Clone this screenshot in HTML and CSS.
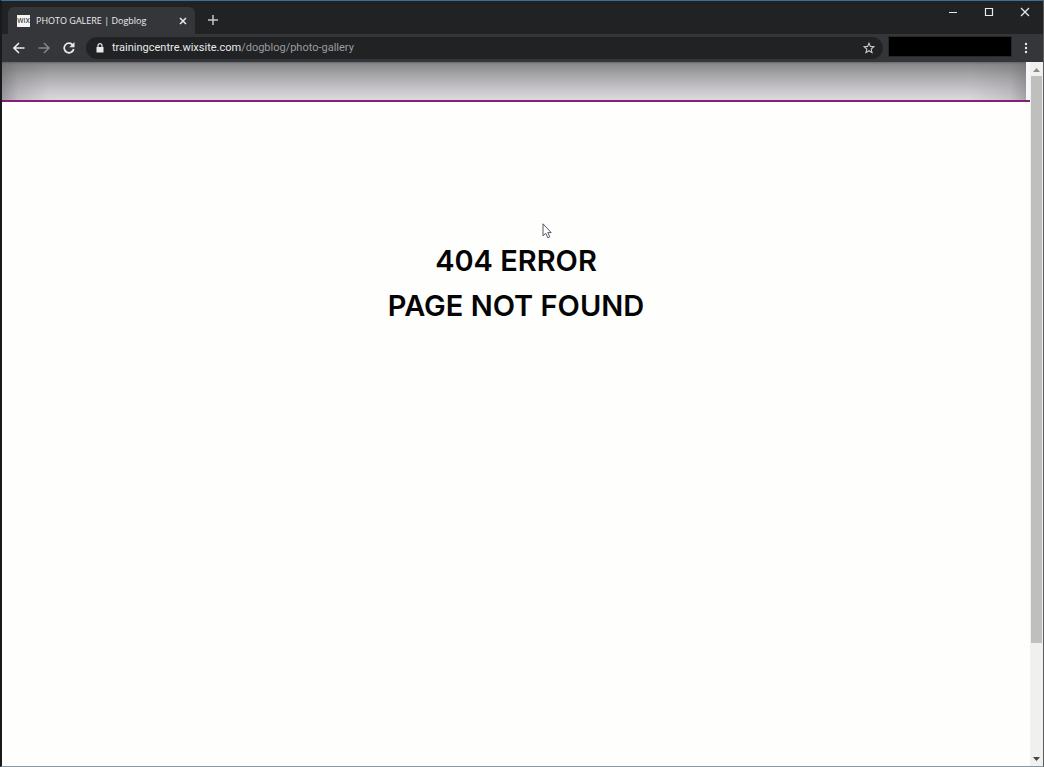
FILE: index.html
```html
<!DOCTYPE html>
<html lang="en">
<head>
<meta charset="utf-8">
<meta name="viewport" content="width=device-width, initial-scale=1">
<title>PHOTO GALERE | Dogblog</title>
<link rel="stylesheet" href="styles.css">
</head>
<body>
<div class="window">
  <div class="tabstrip">
    <div class="tab">
      <span class="favicon">WIX</span>
      <span class="tab-title">PHOTO GALERE | Dogblog</span>
      <button class="icon-button tab-close" type="button" aria-label="Close tab">
        <svg width="8" height="8" viewBox="0 0 8 8"><path d="M1 1l6 6M7 1L1 7" stroke="currentColor" stroke-width="1.5"/></svg>
      </button>
    </div>
    <button class="icon-button new-tab" type="button" aria-label="New tab">
      <svg width="10" height="10" viewBox="0 0 10 10"><path d="M5 0v10M0 5h10" stroke="currentColor" stroke-width="1.5"/></svg>
    </button>
    <div class="window-controls">
      <button class="icon-button control" type="button" aria-label="Minimize">
        <svg width="10" height="10" viewBox="0 0 10 10"><path d="M1 5.5h8" stroke="currentColor"/></svg>
      </button>
      <button class="icon-button control" type="button" aria-label="Maximize">
        <svg width="10" height="10" viewBox="0 0 10 10"><path d="M1.5 1.5h7v7h-7z" fill="none" stroke="currentColor" stroke-width="1.2"/></svg>
      </button>
      <button class="icon-button control" type="button" aria-label="Close">
        <svg width="10" height="10" viewBox="0 0 10 10"><path d="M1 1l8 8M9 1L1 9" stroke="currentColor" stroke-width="1.2"/></svg>
      </button>
    </div>
  </div>
  <div class="toolbar">
    <button class="icon-button nav" type="button" aria-label="Back">
      <svg width="12" height="12" viewBox="0 0 12 12"><path d="M11.5 6H1.5M6 1L1 6l5 5" fill="none" stroke="currentColor" stroke-width="1.6"/></svg>
    </button>
    <button class="icon-button nav forward" type="button" aria-label="Forward">
      <svg width="12" height="12" viewBox="0 0 12 12"><path d="M.5 6h10M6 1l5 5-5 5" fill="none" stroke="currentColor" stroke-width="1.5"/></svg>
    </button>
    <button class="icon-button nav" type="button" aria-label="Reload">
      <svg width="12" height="12" viewBox="0 0 12 12"><path d="M9.8 3A4.8 4.8 0 1 0 10.7 7" fill="none" stroke="currentColor" stroke-width="1.7"/><path d="M11.5 0v5.2H6.3z" fill="currentColor"/></svg>
    </button>
    <div class="address">
      <svg class="lock" width="8" height="10" viewBox="0 0 8 10"><path d="M.5 4h7v5.5h-7z" fill="currentColor"/><path d="M2 4.500V2.700a2 2 0 0 1 4 0v1.800" fill="none" stroke="currentColor" stroke-width="1.200"/></svg>
      <span class="url">trainingcentre.wixsite.com<span class="path">/dogblog/photo-gallery</span></span>
      <button class="icon-button star" type="button" aria-label="Bookmark this page">
        <svg width="12" height="12" viewBox="0 0 12 12"><path d="M6 1.200l1.400 3.200 3.500.3-2.700 2.300.8 3.500L6 8.700 3 10.500l.8-3.500L1.100 4.700l3.500-.3z" fill="none" stroke="currentColor" stroke-width="1.100"/></svg>
      </button>
    </div>
    <div class="redacted"></div>
    <button class="icon-button menu" type="button" aria-label="Menu">
      <svg width="4" height="12" viewBox="0 0 4 12" fill="currentColor"><circle cx="2" cy="2" r="1.200"/><circle cx="2" cy="6" r="1.200"/><circle cx="2" cy="10" r="1.200"/></svg>
    </button>
  </div>
  <div class="viewport">
    <main class="page">
      <div class="banner"><div class="banner-shade"></div></div>
      <h1 class="message">404 ERROR<br>PAGE NOT FOUND</h1>
    </main>
    <div class="scrollbar">
      <svg class="arrow-up" width="7" height="4" viewBox="0 0 7 4"><path d="M3.500 0L7 4H0z" fill="currentColor"/></svg>
      <div class="track"><div class="thumb"></div></div>
      <svg class="arrow-down" width="7" height="4" viewBox="0 0 7 4"><path d="M0 0h7L3.500 4z" fill="currentColor"/></svg>
    </div>
  </div>
  <svg class="cursor" width="10" height="16" viewBox="0 0 10 16"><path d="M1 .8v12l2.800-2.500 2 4.500 2-1-2-4.200h3.400z" fill="#fff" stroke="#45454f" stroke-width=".9"/></svg>
</div>
</body>
</html>
```

FILE: styles.css
```css
* {
  box-sizing: border-box;
}

body {
  margin: 0;
  font-family: Roboto, "Open Sans", sans-serif;
}

.window {
  position: relative;
  display: flex;
  flex-direction: column;
  min-height: 100vh;
  background: #202224;
  border-top: 1px solid #38719b;
  border-right: 1px solid #5c5c5c;
  border-bottom: 1px solid #8d969d;
  border-left: 2px solid #17191b;
}

.icon-button {
  display: flex;
  align-items: center;
  justify-content: center;
  padding: 0;
  color: #e8eaed;
  background: none;
  border: 0;
}

.tabstrip {
  display: flex;
  height: 33px;
  padding-left: 6px;
}

.tab {
  display: flex;
  align-items: center;
  width: 187px;
  height: 27px;
  margin-top: 6px;
  padding: 0 5px 0 9px;
  background: #35363a;
  border-radius: 6px 6px 0 0;
}

.favicon {
  width: 13px;
  height: 12px;
  color: #222;
  background: #f4f4f4;
  font-size: 7px;
  line-height: 12px;
  text-align: center;
}

.tab-title {
  flex: 1;
  margin-left: 6px;
  color: #eceef0;
  font-family: "Open Sans", "Noto Sans", sans-serif;
  font-size: 9px;
  line-height: 14px;
  white-space: nowrap;
}

.tab-close {
  width: 14px;
  height: 14px;
}

.new-tab {
  width: 20px;
  height: 20px;
  margin: 9px 0 0 8px;
  color: #c6c8ca;
}

.window-controls {
  display: flex;
  height: 22px;
  margin-left: auto;
}

.control {
  width: 36px;
}

.toolbar {
  display: flex;
  align-items: center;
  height: 28px;
  padding: 0 8px 0 4px;
  background: #35363a;
}

.nav {
  width: 25px;
  height: 24px;
}

.forward {
  color: #85878a;
}

.address {
  display: flex;
  flex: 1;
  align-items: center;
  height: 22px;
  margin-left: 5px;
  padding: 0 6px 0 10px;
  color: #e8eaed;
  background: #202224;
  border-radius: 11px;
}

.url {
  flex: 1;
  margin-left: 8px;
  font-size: 11px;
  line-height: 16px;
  white-space: nowrap;
}

.path {
  color: #9a9da1;
}

.star {
  width: 16px;
  height: 16px;
  color: #c6c8ca;
}

.redacted {
  align-self: flex-start;
  width: 124px;
  height: 21px;
  margin: 2px 5px 0;
  background: #000;
  border: 1px solid #27282a;
}

.menu {
  width: 18px;
  height: 20px;
}

.viewport {
  display: flex;
  flex: 1;
  background: #fefefd;
}

.page {
  flex: 1;
}

.banner {
  height: 40px;
  padding-right: 4px;
  background: #f6f6f6;
  border-bottom: 2px solid #842075;
}

.banner-shade {
  height: 38px;
  background:
    linear-gradient(90deg, rgba(90, 90, 94, 0.5), rgba(90, 90, 94, 0.2) 16px, transparent 48px),
    linear-gradient(270deg, rgba(90, 90, 94, 0.4), rgba(90, 90, 94, 0.15) 16px, transparent 56px),
    linear-gradient(#66676a, #88898c 2px, #a9a8ab 14px, #c9c6cb 28px, #dcd8dd);
}

.message {
  margin: 136px 0 0;
  color: #050505;
  font-family: Inter, "Open Sans", sans-serif;
  font-size: 29px;
  font-weight: 600;
  line-height: 45px;
  text-align: center;
}

.scrollbar {
  display: flex;
  flex-direction: column;
  align-items: center;
  width: 13px;
  padding: 6px 1px 5px;
  color: #8c8c8c;
  background: #f0f0ef;
}

.track {
  flex: 1;
  width: 100%;
  margin: 4px 0 6px;
}

.thumb {
  height: 84%;
  background: #bfbfbe;
}

.arrow-down {
  color: #454545;
}

.cursor {
  position: absolute;
  top: 222px;
  left: 540px;
}
```
